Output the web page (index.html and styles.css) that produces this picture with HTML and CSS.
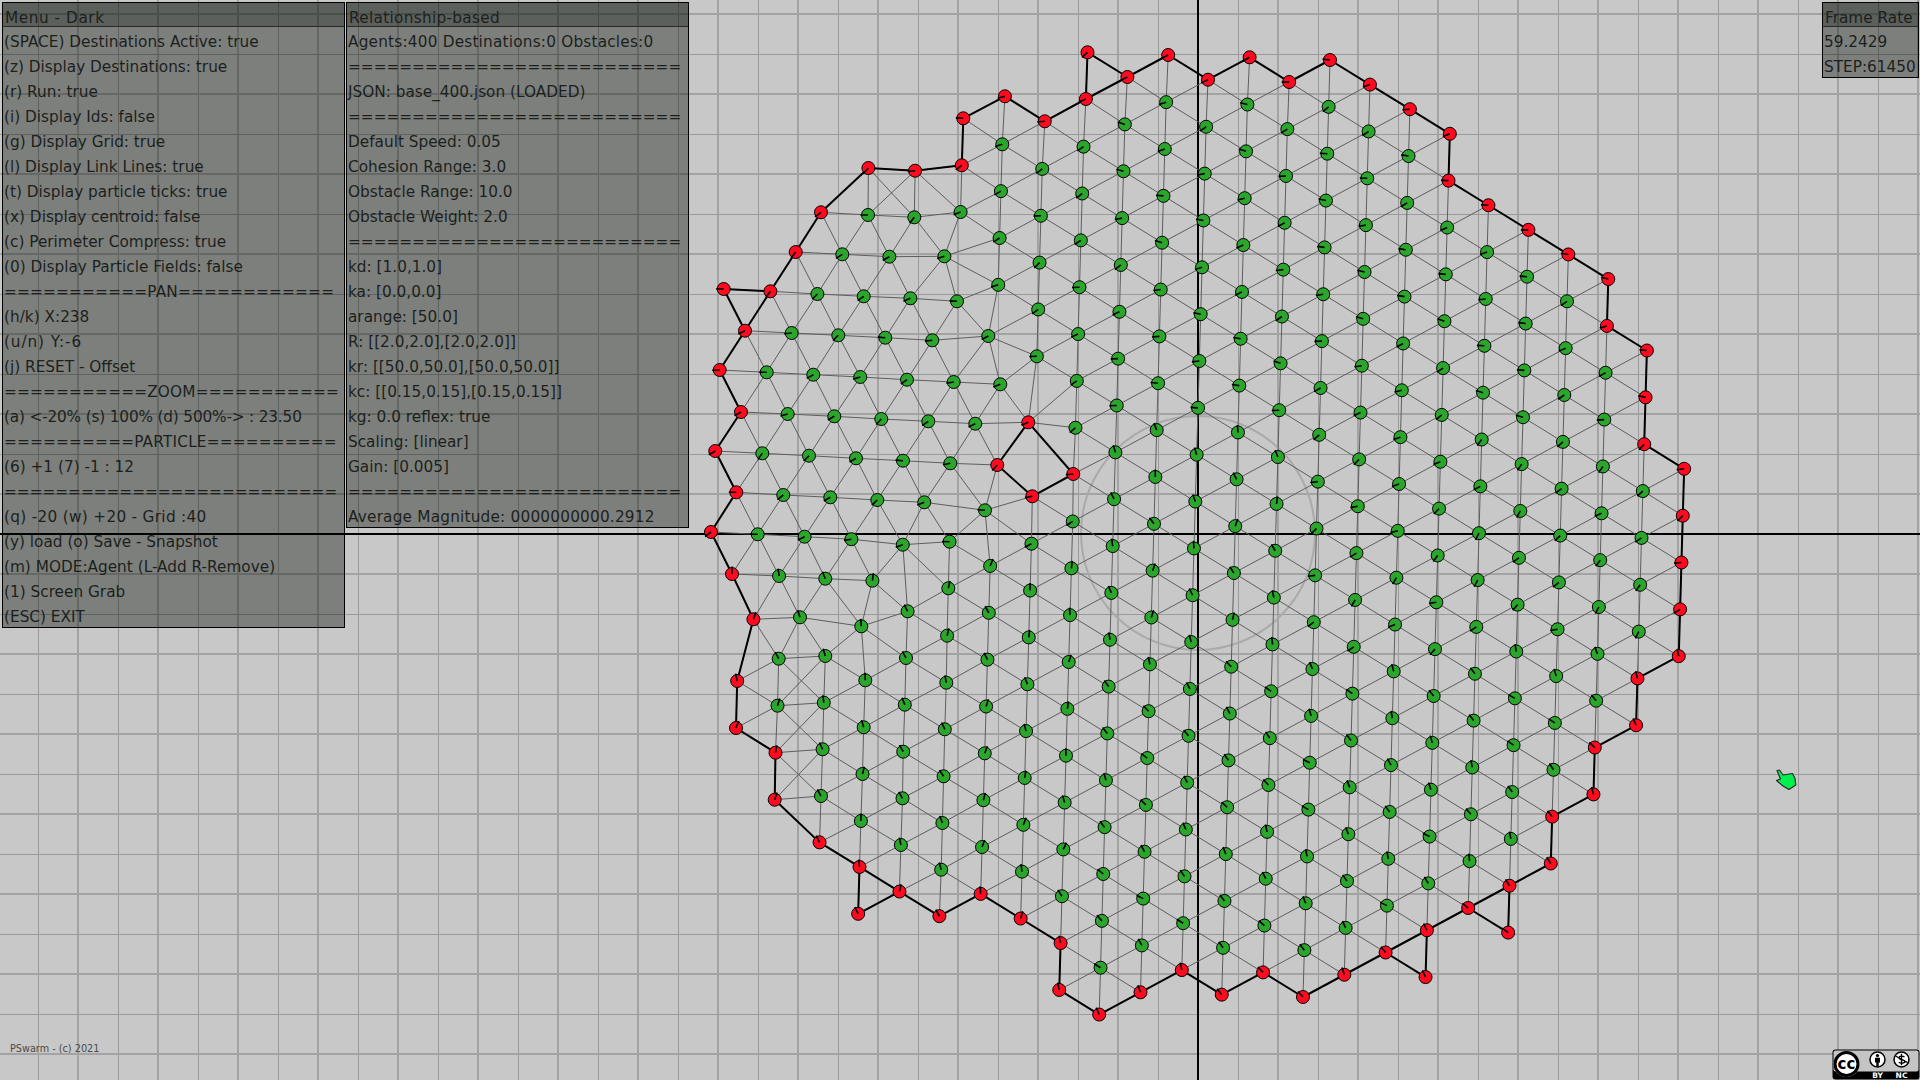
FILE: index.html
```html
<!DOCTYPE html>
<html lang="en">
<head>
  <meta charset="UTF-8">
  <title>PSwarm</title>
  <link rel="stylesheet" href="styles.css">
</head>
<body>
  <div class="stage">
    <svg id="world" class="world" width="1920" height="1080" viewBox="0 0 1920 1080"></svg>

    <div class="overlay">
      <div class="panel">
        <div class="panel-title wide-3">Menu - Dark</div>
        <div class="row">(SPACE) Destinations Active: true</div>
        <div class="row">(z) Display Destinations: true</div>
        <div class="row">(r) Run: true</div>
        <div class="row">(i) Display Ids: false</div>
        <div class="row">(g) Display Grid: true</div>
        <div class="row">(l) Display Link Lines: true</div>
        <div class="row">(t) Display particle ticks: true</div>
        <div class="row">(x) Display centroid: false</div>
        <div class="row">(c) Perimeter Compress: true</div>
        <div class="row">(0) Display Particle Fields: false</div>
        <div class="row wide-1">===========PAN============</div>
        <div class="row">(h/k) X:238</div>
        <div class="row wide-4">(u/n) Y:-6</div>
        <div class="row">(j) RESET - Offset</div>
        <div class="row wide-1">===========ZOOM===========</div>
        <div class="row tight">(a) &lt;-20% (s) 100% (d) 500%-&gt; : 23.50</div>
        <div class="row wide-1">==========PARTICLE==========</div>
        <div class="row">(6) +1 (7) -1 : 12</div>
        <div class="row">==========================</div>
        <div class="row wide-2">(q) -20 (w) +20 - Grid :40</div>
        <div class="row">(y) load (o) Save - Snapshot</div>
        <div class="row">(m) MODE:Agent (L-Add R-Remove)</div>
        <div class="row">(1) Screen Grab</div>
        <div class="row">(ESC) EXIT</div>
      </div>

      <div class="panel">
        <div class="panel-title wide-2">Relationship-based</div>
        <div class="row wide-1">Agents:400 Destinations:0 Obstacles:0</div>
        <div class="row">==========================</div>
        <div class="row">JSON: base_400.json (LOADED)</div>
        <div class="row">==========================</div>
        <div class="row">Default Speed: 0.05</div>
        <div class="row">Cohesion Range: 3.0</div>
        <div class="row">Obstacle Range: 10.0</div>
        <div class="row">Obstacle Weight: 2.0</div>
        <div class="row">==========================</div>
        <div class="row">kd: [1.0,1.0]</div>
        <div class="row">ka: [0.0,0.0]</div>
        <div class="row">arange: [50.0]</div>
        <div class="row">R: [[2.0,2.0],[2.0,2.0]]</div>
        <div class="row">kr: [[50.0,50.0],[50.0,50.0]]</div>
        <div class="row">kc: [[0.15,0.15],[0.15,0.15]]</div>
        <div class="row">kg: 0.0 reflex: true</div>
        <div class="row">Scaling: [linear]</div>
        <div class="row">Gain: [0.005]</div>
        <div class="row">==========================</div>
        <div class="row wide-1">Average Magnitude: 0000000000.2912</div>
      </div>

      <div class="panel panel-rate">
        <div class="panel-title">Frame Rate</div>
        <div class="row">59.2429</div>
        <div class="row">STEP:61450</div>
      </div>
    </div>

    <div class="credit">PSwarm - (c) 2021</div>

    <svg class="cc-badge" width="88" height="31" viewBox="0 0 88 31">
      <rect x="0.5" y="0.5" width="87" height="30" rx="3" fill="#000"/>
      <rect x="1.5" y="1.5" width="85" height="21" rx="2" fill="#c4c4c4"/>
      <circle cx="14.5" cy="15" r="13" fill="#c4c4c4"/>
      <circle cx="14.5" cy="15" r="11.5" fill="#fff" stroke="#000" stroke-width="3"/>
      <text class="cc-mark" x="14.5" y="19.5">cc</text>
      <circle cx="45.5" cy="10.5" r="7.5" fill="#fff" stroke="#000" stroke-width="1.5"/>
      <circle cx="45.5" cy="6.6" r="1.6" fill="#000"/>
      <path d="M43 8.8h5v4.6h-1.3v4h-2.4v-4H43z" fill="#000"/>
      <circle cx="69.5" cy="10.5" r="7.5" fill="#fff" stroke="#000" stroke-width="1.5"/>
      <path d="M63.5 7l12 6.5M72.5 8c-1.5-1.3-5.5-1.3-5.5 .8 0 2.6 5.8 1.2 5.8 3.8 0 2-4.2 2-6 .6M69.5 4.8v11.4" fill="none" stroke="#000" stroke-width="1.4"/>
      <text class="cc-label" x="45.5" y="29">BY</text>
      <text class="cc-label" x="69.5" y="29">NC</text>
    </svg>

    <svg class="cursor" width="24" height="24" viewBox="0 0 24 24">
      <path d="M2 1.5l2.5-.5 3.5 5 9.5-1.5 2.5 5 .8 6.5-6.8 4.5-6-3.5-6.5-5.5 4-1.5z" fill="#00f050" stroke="#2a2a2a" stroke-width="1.2" stroke-linejoin="round"/>
    </svg>
  </div>

  <script src="script.js"></script>
</body>
</html>
```

FILE: styles.css
```css
html, body {
  margin: 0;
  padding: 0;
  background-color: #c8c8c8;
}
.stage {
  position: relative;
  width: 1920px;
  height: 1080px;
  overflow: hidden;
  background-color: #c8c8c8;
  font-family: "DejaVu Sans", sans-serif;
}
.world {
  display: block;
}
.overlay {
  position: absolute;
  inset: 0;
  display: flex;
  align-items: flex-start;
  gap: 1px;
  padding: 2px 1px 0 2px;
  box-sizing: border-box;
}
.panel {
  width: 343px;
  box-sizing: border-box;
  border: 1px solid #000;
  background-color: rgba(0, 8, 0, 0.38);
  color: #1d1f1d;
  font-size: 15.3px;
  white-space: nowrap;
}
.panel-rate {
  margin-left: auto;
}
.panel + .panel-rate {
  width: 97px;
}
.panel-title {
  height: 24px;
  box-sizing: border-box;
  padding: 5px 0 0 2px;
  line-height: 20px;
  background-color: rgba(0, 8, 0, 0.26);
  border-bottom: 1px solid #2a2a2a;
}
.row {
  height: 25px;
  box-sizing: border-box;
  padding: 5px 0 0 1px;
  line-height: 20px;
}
.wide-1 { letter-spacing: 0.2px; }
.wide-2 { letter-spacing: 0.3px; }
.wide-3 { letter-spacing: 0.55px; }
.wide-4 { letter-spacing: 0.9px; }
.tight { letter-spacing: -0.17px; }
.credit {
  position: absolute;
  left: 10px;
  top: 1042px;
  font-size: 9.7px;
  line-height: 14px;
  color: #4a4a4a;
}
.cc-badge {
  position: absolute;
  left: 1832px;
  top: 1049px;
}
.cc-mark {
  font-family: "DejaVu Sans", sans-serif;
  font-size: 15px;
  font-weight: 700;
  text-anchor: middle;
  fill: #000;
}
.cc-label {
  font-family: "DejaVu Sans", sans-serif;
  font-size: 7.5px;
  font-weight: 700;
  text-anchor: middle;
  fill: #fff;
}
.cursor {
  position: absolute;
  left: 1775px;
  top: 769px;
}
```

FILE: script.js
```js
// lattice the swarm settled into; most agents sit close to it
const ORIGIN = [1330, 60];
const lattice = (i, j) => [ORIGIN[0] + 39.95 * i - 1.35 * j, ORIGIN[1] + 24.6 * i + 46.85 * j];

// green agents per column: [i, from j, to j]
const COLUMNS = [
  [8, 5, 8], [7, 3, 10], [6, 2, 12], [5, 2, 14], [4, 2, 15], [3, 2, 16],
  [2, 1, 17], [1, 1, 18], [0, 1, 19], [-1, 2, 19], [-2, 2, 20], [-3, 3, 20],
  [-4, 3, 21], [-5, 4, 22], [-6, 5, 11], [-6, 13, 21], [-7, 6, 10], [-7, 14, 21],
  [-8, 6, 9], [-8, 15, 21],
];

// the pushed-around part on the left
const LOOSE = [
  [868, 215], [914.3, 217.3], [960.6, 212],
  [842.3, 254.3], [889.4, 256.7], [944.4, 256.3],
  [817.4, 294], [863.7, 296.3], [910.4, 298.3], [957, 301.3],
  [791.7, 333], [838.3, 335.3], [885.3, 337.7], [932.3, 340.3], [988.3, 336],
  [766.7, 372.3], [813.3, 374.7], [860.3, 377], [907, 379.7], [953.7, 382], [1000.3, 384.3],
  [787.7, 414], [834.3, 416.3], [881.3, 419], [928.3, 421.3], [975.3, 423.7],
  [762.3, 453.3], [809, 455.7], [856, 458.3], [903, 460.7], [950.3, 463.3],
  [783.3, 495], [830.3, 497.3], [877.3, 500], [924.3, 502.3], [985, 510.3],
  [757.7, 534.3], [804.6, 536.7], [851.4, 539.2], [902.8, 544.7], [949.6, 541.7],
  [779.1, 576], [825.3, 578.7], [872.4, 580.7], [948.3, 588.3],
  [800, 617.3], [861.3, 626.3], [907.6, 611.3],
  [778.7, 658.7], [825.3, 656], [906, 658], [947.1, 635.7],
  [865.3, 680.3], [946.3, 682.7],
  [777.5, 705.7], [823.8, 702.7], [904.8, 704.7],
  [863.7, 727.3], [944.8, 729.3],
  [822.6, 749.3], [903.2, 751.7],
  [862.5, 774], [943.6, 776.3],
  [821, 796], [902.5, 798.3],
  [860.9, 821], [942.4, 823],
  [900.9, 845],
  [941.2, 869.7],
];

// perimeter, clockwise from the top
const PERIMETER = [
  [0, 0], [1, 0], [2, 0], [3, 0], [3, 1], [4, 1], [5, 1], [6, 1], [7, 1], [7, 2], [8, 2], [8, 3], [8, 4],
  [9, 4], [9, 5], [9, 6], [9, 7], [9, 8], [8, 9], [8, 10], [7, 11], [7, 12], [6, 13], [6, 14], [5, 15],
  [5, 16], [4, 16], [3, 17], [3, 18], [2, 18], [1, 19], [0, 20], [-1, 20], [-2, 21], [-3, 21], [-4, 22],
  [-5, 23], [-6, 23], [-6, 22], [-7, 22], [-8, 22], [-9, 23], [-10, 23], [-11, 24], [-11, 23], [-12, 23],
].map(([i, j]) => lattice(i, j)).concat([
  [774.7, 799.7], [775.5, 752.7], [736, 728], [737.2, 681], [753.4, 619.3], [732, 574], [711, 532],
  [736.3, 492.3], [715.3, 451], [741, 412], [719.7, 370], [745, 330.7], [723.7, 289], [770.4, 291.3],
  [795.7, 252], [821, 212.3], [868.4, 168], [915.1, 170.7], [961.8, 165.3], [963.3, 118.3],
  [1004.9, 96.3], [1044.8, 121.3], [1085.9, 99], [1087.5, 52.3], [1127.4, 77], [1168.2, 55],
  [1208, 79.7], [1249.6, 57.3], [1289.2, 82],
]);

// corners of the thick outline that are closed by one more edge
const EXTRA_EDGES = [
  [lattice(5, 15), lattice(4, 16)],
  [lattice(3, 17), lattice(2, 18)],
  [lattice(-10, 23), lattice(-11, 23)],
  [[1085.9, 99], [1127.4, 77]],
  [[745, 330.7], [770.4, 291.3]],
];

// hole in the middle of the swarm
const ISLAND = [[1028.3, 422.3], [1073.3, 474], [1032.3, 496.3], [997.3, 465]];

const LINK_RANGE = 70;
const TICK = 7.5;

const world = document.getElementById('world');

function add(tag, attrs) {
  const el = document.createElementNS('http://www.w3.org/2000/svg', tag);
  for (const key in attrs) el.setAttribute(key, attrs[key]);
  world.appendChild(el);
  return el;
}

function line(x1, y1, x2, y2, stroke, width) {
  return add('line', { x1, y1, x2, y2, stroke, 'stroke-width': width });
}

function drawGrid() {
  for (let x = 38.5; x < 1920; x += 80) line(x, 0, x, 1080, '#9a9a9a', 1);
  for (let x = 78; x < 1920; x += 80) line(x, 0, x, 1080, '#a3a3a3', 2);
  for (let y = 54.5; y < 1080; y += 80) line(0, y, 1920, y, '#9a9a9a', 1);
  for (let y = 14; y < 1080; y += 80) line(0, y, 1920, y, '#a3a3a3', 2);
}

function drawAxes() {
  add('circle', { cx: 1198, cy: 533, r: 117, fill: 'none', stroke: '#aaaaaa', 'stroke-width': 2 });
  line(0, 534, 1920, 534, '#000', 2);
  line(1198, 0, 1198, 1080, '#000', 2);
}

function tickAngle(x, y, n) {
  let base;
  if (x < 1100) base = y < 550 ? 155 : -95;
  else if (y < 420) base = 170;
  else if (y < 650) base = x < 1280 ? -100 : 145;
  else base = -125;
  const jitter = Math.sin(n * 12.9898) * 43758.5453;
  return (base + (jitter - Math.floor(jitter) - 0.5) * 60) * Math.PI / 180;
}

const greens = [...LOOSE];
COLUMNS.forEach(([i, from, to]) => {
  for (let j = from; j <= to; j++) greens.push(lattice(i, j));
});
const reds = [...PERIMETER, ...ISLAND];
const agents = [...greens, ...reds];

drawGrid();
drawAxes();

for (let a = 0; a < agents.length; a++) {
  for (let b = a + 1; b < agents.length; b++) {
    const [x1, y1] = agents[a];
    const [x2, y2] = agents[b];
    if (Math.hypot(x2 - x1, y2 - y1) < LINK_RANGE) line(x1, y1, x2, y2, '#5e5e5e', 1);
  }
}

[PERIMETER, ISLAND].forEach(loop => {
  loop.forEach((p, n) => {
    const q = loop[(n + 1) % loop.length];
    line(p[0], p[1], q[0], q[1], '#000', 2);
  });
});
EXTRA_EDGES.forEach(([p, q]) => line(p[0], p[1], q[0], q[1], '#000', 2));

agents.forEach(([x, y], n) => {
  const fill = n < greens.length ? '#2ca52c' : '#ff0a1e';
  add('circle', { cx: x, cy: y, r: 6.5, fill, stroke: '#000', 'stroke-width': 1 });
  const angle = tickAngle(x, y, n + 1);
  line(x, y, x + Math.cos(angle) * TICK, y + Math.sin(angle) * TICK, '#000', 1.6);
});
```
